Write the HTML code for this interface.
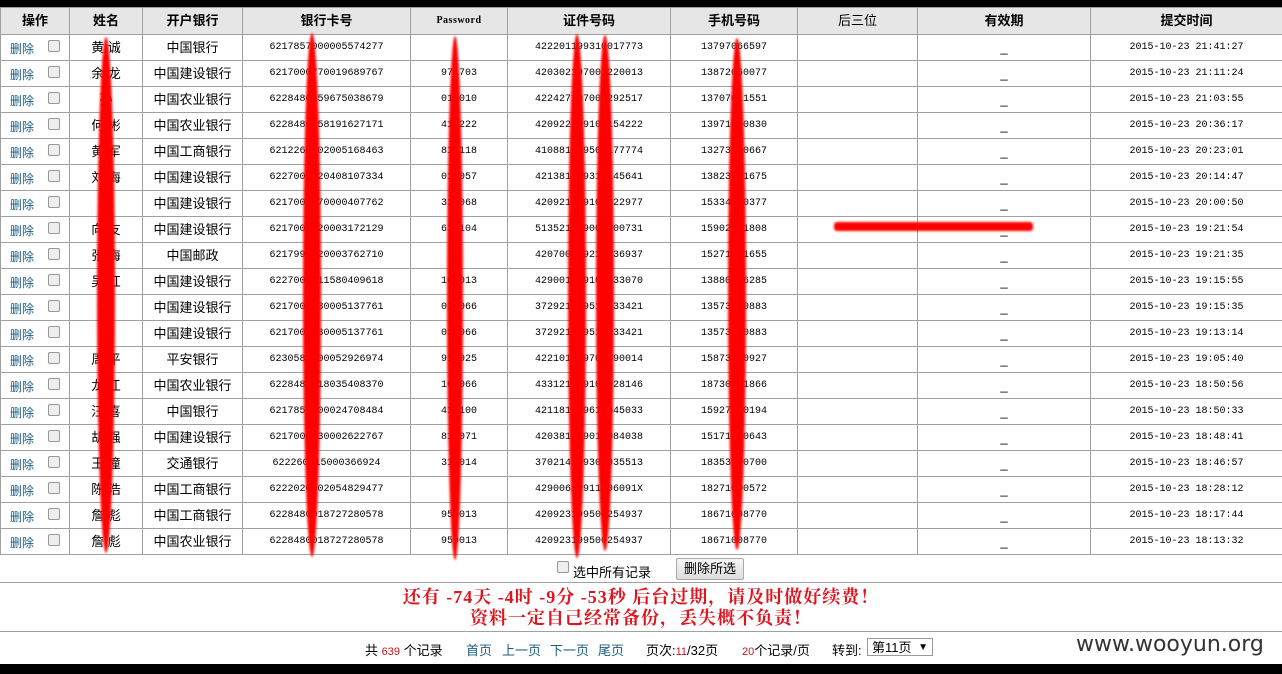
<!DOCTYPE html><html><head><meta charset="utf-8"><style>
body{margin:0;width:1282px;height:674px;background:#fff;position:relative;overflow:hidden;font-family:"Liberation Sans","Noto Sans CJK SC",sans-serif;}
.top{position:absolute;left:0;top:0;width:1282px;height:7px;background:#000}
.bot{position:absolute;left:0;top:664px;width:1282px;height:10px;background:#000}
table{position:absolute;left:0;top:7px;border-collapse:collapse;table-layout:fixed;width:1282px}
td,th{border:1px solid #a0a0a0;height:25px;padding:0;text-align:center;font-size:13px;color:#000;white-space:nowrap;overflow:hidden;vertical-align:middle;line-height:14px}
th{background:#e6e6e6;height:26px;font-weight:bold}
td.n{font-family:"Liberation Mono",monospace;font-size:10px}
td.op{text-align:left;padding-left:9px}
.del{color:#1a5c80;font-size:12px}
.cb{display:inline-block;width:10px;height:10px;border:1px solid #999;border-radius:2px;background:#eee;margin-left:14px;vertical-align:1px}
.pw{font-family:"Liberation Serif",serif;font-size:10px;letter-spacing:.5px}
.sel{position:absolute;top:554px;left:0;width:1282px;height:28px;border-bottom:1px solid #a0a0a0;font-size:13px}
.red{position:absolute;top:583px;left:0;width:1282px;height:49px;border-bottom:1px solid #a0a0a0;text-align:center;color:#e0141e;font-weight:bold;font-size:18px;letter-spacing:1px;line-height:21px;font-family:"Liberation Serif","Noto Serif CJK SC",serif;padding-top:4px;box-sizing:border-box}
.pg{position:absolute;top:633px;left:0;width:1282px;height:31px;font-size:13px}
.pg span{position:absolute;top:7px}
.b{color:#1a5c80}.r{color:#c8141e;font-size:11px}
.wm{position:absolute;left:1076px;top:632px;font-size:22px;color:#333;font-family:"DejaVu Sans",sans-serif}
</style></head><body>
<div class="top"></div>
<table>
<colgroup><col style="width:69px"><col style="width:73px"><col style="width:100px"><col style="width:168px"><col style="width:97px"><col style="width:163px"><col style="width:127px"><col style="width:120px"><col style="width:173px"><col style="width:192px"></colgroup>
<tr><th>操作</th><th>姓名</th><th>开户银行</th><th>银行卡号</th><th class="pw">Password</th><th>证件号码</th><th>手机号码</th><th style="font-weight:normal">后三位</th><th>有效期</th><th>提交时间</th></tr>
<tr><td class="op"><span class="del">删除</span><span class="cb"></span></td><td>黄 诚</td><td>中国银行</td><td class="n">6217857000005574277</td><td class="n"></td><td class="n">422201199310017773</td><td class="n">13797066597</td><td></td><td>_</td><td class="n">2015-10-23 21:41:27</td></tr>
<tr><td class="op"><span class="del">删除</span><span class="cb"></span></td><td>余 龙</td><td>中国建设银行</td><td class="n">6217000770019689767</td><td class="n">971703</td><td class="n">420302197001220013</td><td class="n">13872060077</td><td></td><td>_</td><td class="n">2015-10-23 21:11:24</td></tr>
<tr><td class="op"><span class="del">删除</span><span class="cb"></span></td><td>孙 </td><td>中国农业银行</td><td class="n">6228480659675038679</td><td class="n">010010</td><td class="n">422427197000292517</td><td class="n">13707011551</td><td></td><td>_</td><td class="n">2015-10-23 21:03:55</td></tr>
<tr><td class="op"><span class="del">删除</span><span class="cb"></span></td><td>何 彬</td><td>中国农业银行</td><td class="n">6228480658191627171</td><td class="n">410222</td><td class="n">420922199109154222</td><td class="n">13971000830</td><td></td><td>_</td><td class="n">2015-10-23 20:36:17</td></tr>
<tr><td class="op"><span class="del">删除</span><span class="cb"></span></td><td>黄 军</td><td>中国工商银行</td><td class="n">6212260002005168463</td><td class="n">810118</td><td class="n">410881199500177774</td><td class="n">13273000667</td><td></td><td>_</td><td class="n">2015-10-23 20:23:01</td></tr>
<tr><td class="op"><span class="del">删除</span><span class="cb"></span></td><td>刘 海</td><td>中国建设银行</td><td class="n">6227000020408107334</td><td class="n">010057</td><td class="n">421381199310145641</td><td class="n">13823011675</td><td></td><td>_</td><td class="n">2015-10-23 20:14:47</td></tr>
<tr><td class="op"><span class="del">删除</span><span class="cb"></span></td><td>王 </td><td>中国建设银行</td><td class="n">6217000770000407762</td><td class="n">310068</td><td class="n">420921199100022977</td><td class="n">15334070377</td><td></td><td>_</td><td class="n">2015-10-23 20:00:50</td></tr>
<tr><td class="op"><span class="del">删除</span><span class="cb"></span></td><td>向 友</td><td>中国建设银行</td><td class="n">6217000020003172129</td><td class="n">610104</td><td class="n">513521199000000731</td><td class="n">15902011808</td><td></td><td>_</td><td class="n">2015-10-23 19:21:54</td></tr>
<tr><td class="op"><span class="del">删除</span><span class="cb"></span></td><td>张 海</td><td>中国邮政</td><td class="n">6217990020003762710</td><td class="n"></td><td class="n">420700199210036937</td><td class="n">15271011655</td><td></td><td>_</td><td class="n">2015-10-23 19:21:35</td></tr>
<tr><td class="op"><span class="del">删除</span><span class="cb"></span></td><td>吴 红</td><td>中国建设银行</td><td class="n">6227000011580409618</td><td class="n">100013</td><td class="n">429001199100033070</td><td class="n">13880066285</td><td></td><td>_</td><td class="n">2015-10-23 19:15:55</td></tr>
<tr><td class="op"><span class="del">删除</span><span class="cb"></span></td><td>张 </td><td>中国建设银行</td><td class="n">6217000030005137761</td><td class="n">010066</td><td class="n">372921199510033421</td><td class="n">13573000883</td><td></td><td>_</td><td class="n">2015-10-23 19:15:35</td></tr>
<tr><td class="op"><span class="del">删除</span><span class="cb"></span></td><td>张 </td><td>中国建设银行</td><td class="n">6217000030005137761</td><td class="n">010066</td><td class="n">372921199510033421</td><td class="n">13573000883</td><td></td><td>_</td><td class="n">2015-10-23 19:13:14</td></tr>
<tr><td class="op"><span class="del">删除</span><span class="cb"></span></td><td>周 平</td><td>平安银行</td><td class="n">6230580000052926974</td><td class="n">910025</td><td class="n">422101199700090014</td><td class="n">15873000927</td><td></td><td>_</td><td class="n">2015-10-23 19:05:40</td></tr>
<tr><td class="op"><span class="del">删除</span><span class="cb"></span></td><td>龙 江</td><td>中国农业银行</td><td class="n">6228480018035408370</td><td class="n">100066</td><td class="n">433121199100028146</td><td class="n">18730011866</td><td></td><td>_</td><td class="n">2015-10-23 18:50:56</td></tr>
<tr><td class="op"><span class="del">删除</span><span class="cb"></span></td><td>汪 喜</td><td>中国银行</td><td class="n">6217850000024708484</td><td class="n">410100</td><td class="n">421181199610045033</td><td class="n">15927000194</td><td></td><td>_</td><td class="n">2015-10-23 18:50:33</td></tr>
<tr><td class="op"><span class="del">删除</span><span class="cb"></span></td><td>胡 强</td><td>中国建设银行</td><td class="n">6217000030002622767</td><td class="n">810071</td><td class="n">420381199010084038</td><td class="n">15171000643</td><td></td><td>_</td><td class="n">2015-10-23 18:48:41</td></tr>
<tr><td class="op"><span class="del">删除</span><span class="cb"></span></td><td>王 潼</td><td>交通银行</td><td class="n">622260015000366924</td><td class="n">310014</td><td class="n">370214199300035513</td><td class="n">18353000700</td><td></td><td>_</td><td class="n">2015-10-23 18:46:57</td></tr>
<tr><td class="op"><span class="del">删除</span><span class="cb"></span></td><td>陈 浩</td><td>中国工商银行</td><td class="n">6222020002054829477</td><td class="n"></td><td class="n">42900619911106091X</td><td class="n">18271000572</td><td></td><td>_</td><td class="n">2015-10-23 18:28:12</td></tr>
<tr><td class="op"><span class="del">删除</span><span class="cb"></span></td><td>詹 彪</td><td>中国工商银行</td><td class="n">6228480018727280578</td><td class="n">950013</td><td class="n">420923199500254937</td><td class="n">18671008770</td><td></td><td>_</td><td class="n">2015-10-23 18:17:44</td></tr>
<tr><td class="op"><span class="del">删除</span><span class="cb"></span></td><td>詹 彪</td><td>中国农业银行</td><td class="n">6228480018727280578</td><td class="n">950013</td><td class="n">420923199500254937</td><td class="n">18671008770</td><td></td><td>_</td><td class="n">2015-10-23 18:13:32</td></tr>
</table>
<div class="sel"><span class="cb" style="position:absolute;left:557px;top:7px;margin:0"></span><span style="position:absolute;left:573px;top:8px">选中所有记录</span><span style="position:absolute;left:676px;top:4px;width:66px;height:20px;border:1px solid #aaa;border-radius:2px;background:linear-gradient(#f6f6f6,#ddd);text-align:center;line-height:20px">删除所选</span></div>
<div class="red">还有 -74天 -4时 -9分 -53秒 后台过期，请及时做好续费！<br>资料一定自己经常备份，丢失概不负责！</div>
<div class="pg"><span style="left:365px">共 <i class="r" style="font-style:normal">639</i> 个记录</span><span class="b" style="left:466px">首页</span><span class="b" style="left:502px">上一页</span><span class="b" style="left:550px">下一页</span><span class="b" style="left:598px">尾页</span><span style="left:646px">页次:<i class="r" style="font-style:normal">11</i>/32页</span><span style="left:742px"><i class="r" style="font-style:normal">20</i>个记录/页</span><span style="left:832px">转到:</span><span style="left:867px;top:5px;width:66px;height:18px;border:1px solid #999;line-height:18px;padding-left:4px;box-sizing:border-box">第11页 <b style="font-size:10px;float:right;margin-right:4px">▼</b></span></div>
<div class="wm">www.wooyun.org</div>
<svg style="position:absolute;left:0;top:0" width="1282" height="674">
<defs><filter id="f"><feGaussianBlur stdDeviation="1"/></filter></defs>
<g fill="#ff0000" filter="url(#f)">
<ellipse cx="106" cy="295" rx="9" ry="258"/>
<ellipse cx="312" cy="295" rx="9" ry="262"/>
<ellipse cx="455" cy="298" rx="8" ry="262"/>
<ellipse cx="577" cy="296" rx="9" ry="262"/>
<ellipse cx="605" cy="293" rx="9" ry="258"/>
<ellipse cx="737" cy="294" rx="9" ry="256"/>
<rect x="834" y="222" width="199" height="9" rx="3"/>
</g></svg>
<div class="bot"></div>
</body></html>
